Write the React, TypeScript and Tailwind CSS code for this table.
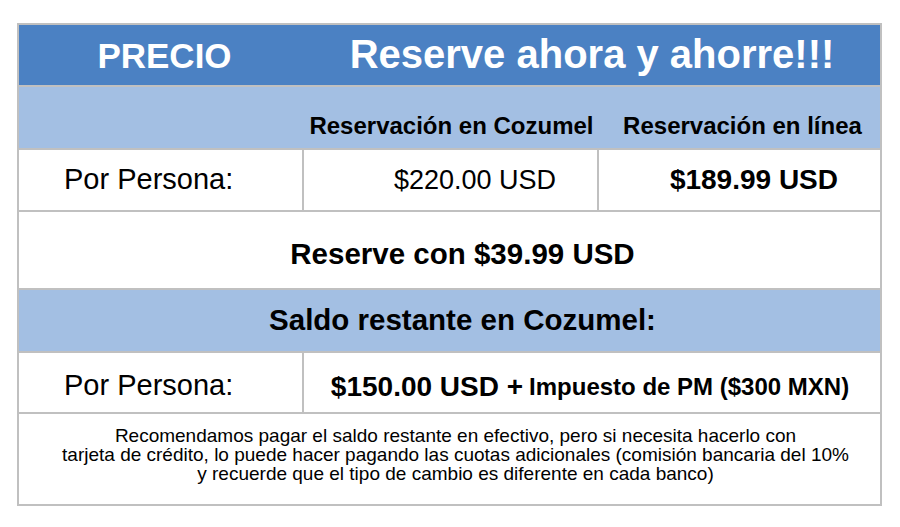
export default function App() {
  const font = { fontFamily: '"Liberation Sans", Arial, sans-serif' };

  return (
    <div className="w-[900px] h-[527px] bg-white pt-[23px] pl-[17px] text-black" style={font}>
      <div className="w-[865px] border-2 border-[#c0c0c0]">
        {/* Header */}
        <div className="flex h-[62px] bg-[#4b81c3] border-b-2 border-[#c0c0c0] text-white font-bold">
          <div className="w-[285px] flex items-center justify-center pl-[6px] text-[35px] leading-none">PRECIO</div>
          <div className="flex-1 flex items-center justify-center text-[40px] leading-none pb-[2px]">
            Reserve ahora y ahorre!!!
          </div>
        </div>

        {/* Column titles */}
        <div className="flex h-[63px] bg-[#a3bfe3] border-b-2 border-[#c0c0c0] font-bold text-[24px] leading-none">
          <div className="w-[285px]" />
          <div className="w-[295px] flex items-end justify-center pb-[10px]">Reservación en Cozumel</div>
          <div className="flex-1 flex items-end justify-center pb-[10px] pl-[6px]">Reservación en línea</div>
        </div>

        {/* Prices */}
        <div className="flex h-[62px] border-b-2 border-[#c0c0c0]">
          <div className="w-[285px] flex items-center pl-[45px] text-[29px] border-r-2 border-[#c0c0c0]">
            Por Persona:
          </div>
          <div className="w-[295px] flex items-center justify-end pr-[41px] text-[27px] border-r-2 border-[#c0c0c0]">
            $220.00 USD
          </div>
          <div className="flex-1 flex items-center justify-end pr-[42px] text-[28px] font-bold">$189.99 USD</div>
        </div>

        {/* Deposit */}
        <div className="flex h-[78px] items-center justify-center pl-[26px] pt-[8px] border-b-2 border-[#c0c0c0] font-bold text-[29.5px]">
          Reserve con $39.99 USD
        </div>

        {/* Remaining */}
        <div className="flex h-[63px] items-center justify-center pl-[26px] bg-[#a3bfe3] border-b-2 border-[#c0c0c0] font-bold text-[29.5px]">
          Saldo restante en Cozumel:
        </div>

        <div className="flex h-[61px] border-b-2 border-[#c0c0c0]">
          <div className="w-[285px] flex items-center pl-[45px] pt-[6px] text-[29px] border-r-2 border-[#c0c0c0]">
            Por Persona:
          </div>
          <div className="flex-1 flex items-center justify-center pt-[8px] pr-[4px] font-bold">
            <span className="text-[28px]">$150.00 USD +</span>
            <span className="text-[24px] ml-[6px]">Impuesto de PM ($300 MXN)</span>
          </div>
        </div>

        {/* Note */}
        <div className="h-[90px] pt-[12px] pl-[12px] text-center text-[19px] leading-[19px]">
          <p>Recomendamos pagar el saldo restante en efectivo, pero si necesita hacerlo con</p>
          <p>tarjeta de crédito, lo puede hacer pagando las cuotas adicionales (comisión bancaria del 10%</p>
          <p>y recuerde que el tipo de cambio es diferente en cada banco)</p>
        </div>
      </div>
    </div>
  );
}
